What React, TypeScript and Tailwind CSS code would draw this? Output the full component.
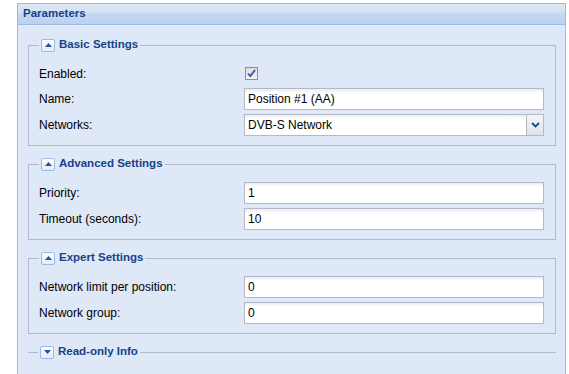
import React from "react";

type Field = { label: string; kind: "check" | "text" | "combo"; value?: string };

const sections: { title: string; collapsed?: boolean; fields: Field[] }[] = [
  {
    title: "Basic Settings",
    fields: [
      { label: "Enabled:", kind: "check" },
      { label: "Name:", kind: "text", value: "Position #1 (AA)" },
      { label: "Networks:", kind: "combo", value: "DVB-S Network" },
    ],
  },
  {
    title: "Advanced Settings",
    fields: [
      { label: "Priority:", kind: "text", value: "1" },
      { label: "Timeout (seconds):", kind: "text", value: "10" },
    ],
  },
  {
    title: "Expert Settings",
    fields: [
      { label: "Network limit per position:", kind: "text", value: "0" },
      { label: "Network group:", kind: "text", value: "0" },
    ],
  },
  { title: "Read-only Info", collapsed: true, fields: [] },
];

function ToggleButton({ collapsed }: { collapsed?: boolean }) {
  return (
    <span className="flex h-[13px] w-[14px] items-center justify-center rounded-[2px] border border-[#99bbe8] bg-[linear-gradient(#ffffff,#e3ecf8)]">
      <svg width="7" height="4" viewBox="0 0 7 4">
        {collapsed ? (
          <path d="M0 0H7L3.5 4Z" fill="#2f4f8f" />
        ) : (
          <path d="M0 4H7L3.5 0Z" fill="#2f4f8f" />
        )}
      </svg>
    </span>
  );
}

function Checkbox() {
  return (
    <span className="flex h-[13px] w-[13px] items-center justify-center border border-[#8e8f8f] bg-[linear-gradient(#dcdcdc,#f4f4f4)]">
      <svg width="9" height="9" viewBox="0 0 9 9">
        <path d="M1 4.5L3.3 7L8 1" fill="none" stroke="#3651a8" strokeWidth="1.8" />
      </svg>
    </span>
  );
}

function TextInput({ value }: { value?: string }) {
  return (
    <div className="flex h-[22px] w-[300px] items-center border border-[#b5b8c8] bg-white bg-[linear-gradient(#ececec,#ffffff_4px)] pl-[3px] text-[12px] text-black">
      {value}
    </div>
  );
}

function Combo({ value }: { value?: string }) {
  return (
    <div className="flex h-[22px] w-[300px] border border-[#b5b8c8] bg-white text-[12px] text-black">
      <div className="flex flex-1 items-center bg-[linear-gradient(#ececec,#ffffff_4px)] pl-[3px]">{value}</div>
      <div className="flex w-[17px] items-center justify-center border-l border-[#b5b8c8] bg-[linear-gradient(#f4f6f9,#dde3ea)]">
        <svg width="9" height="6" viewBox="0 0 9 6">
          <path d="M1 1L4.5 4.5L8 1" fill="none" stroke="#23467f" strokeWidth="1.8" />
        </svg>
      </div>
    </div>
  );
}

export default function App() {
  return (
    <div className="h-screen overflow-hidden bg-white pl-[17px] pt-[3px] font-['Liberation_Sans',Arial,sans-serif]">
      <div className="w-[549px] border border-[#99bbe8]">
        {/* Header */}
        <div className="flex h-[21px] items-center border-b border-[#99bbe8] bg-[linear-gradient(#dce7f5,#d6e3f4_40%,#c7d9f0_45%,#bcd1ee)] pl-[5px] text-[11.5px] font-bold text-[#15428b]">
          Parameters
        </div>

        {/* Body */}
        <div className="flex h-[400px] flex-col gap-[11px] bg-[#dfe8f6] pl-[10px] pr-[9px] pt-[13px]">
          {sections.map((s) => (
            <fieldset
              key={s.title}
              className={
                s.collapsed
                  ? "border-t border-[#b5b8c8] pl-[10px] pr-[11px]"
                  : "border border-[#b5b8c8] pb-[9px] pl-[10px] pr-[11px] pt-[11px]"
              }
            >
              <legend className="px-[2px]">
                <span className="flex h-[14px] items-center gap-[4px] text-[11.5px] font-bold text-[#15428b]">
                  <ToggleButton collapsed={s.collapsed} />
                  {s.title}
                </span>
              </legend>
              {!s.collapsed && (
                <div className="flex flex-col gap-[4px]">
                  {s.fields.map((f) => (
                    <div
                      key={f.label}
                      className={f.kind === "check" ? "flex h-[21px] items-center" : "flex h-[22px] items-center"}
                    >
                      <span className="w-[205px] text-[12px] text-black">{f.label}</span>
                      {f.kind === "check" && (
                        <span className="pl-[1px]">
                          <Checkbox />
                        </span>
                      )}
                      {f.kind === "text" && <TextInput value={f.value} />}
                      {f.kind === "combo" && <Combo value={f.value} />}
                    </div>
                  ))}
                </div>
              )}
            </fieldset>
          ))}
        </div>
      </div>
    </div>
  );
}
